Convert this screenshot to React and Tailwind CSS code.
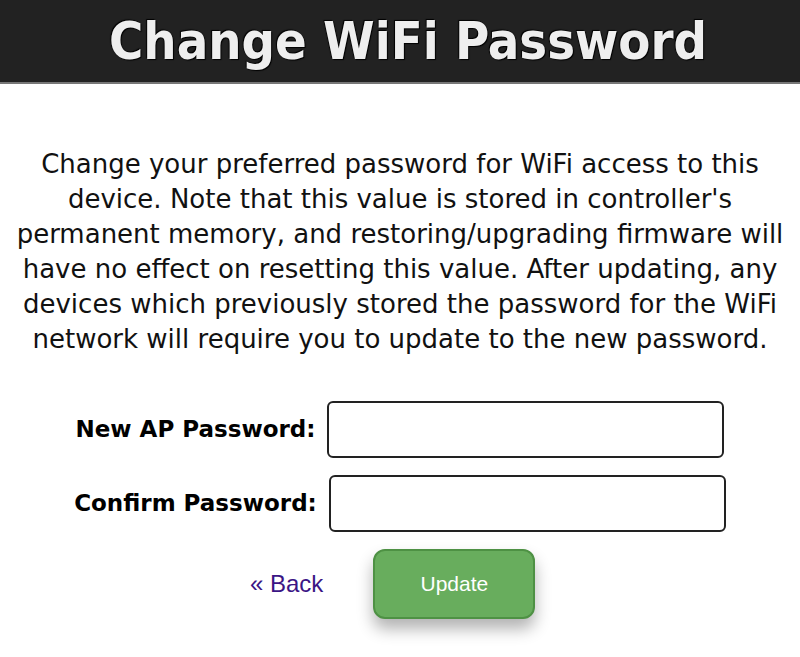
export default function App() {
  return (
    <div className="w-[800px] h-[657px] bg-white overflow-hidden" style={{ fontFamily: '"DejaVu Sans", Verdana, sans-serif' }}>
      <div className="h-[84px] bg-[#222222] border-b-2 border-[#777] flex items-center justify-center pl-[16px]">
        <h1 className="text-[52px] font-bold text-[#eeeeee] leading-none" style={{ fontFamily: '"DejaVu Sans Condensed", "DejaVu Sans", sans-serif', textShadow: '1px 1px 1px #000, -1px -1px 1px #000' }}>Change WiFi Password</h1>
      </div>
      <p className="mt-[63px] text-center text-[26px] leading-[35px] text-[#111] whitespace-nowrap">
        Change your preferred password for WiFi access to this<br />
        device. Note that this value is stored in controller's<br />
        permanent memory, and restoring/upgrading firmware will<br />
        have no effect on resetting this value. After updating, any<br />
        devices which previously stored the password for the WiFi<br />
        network will require you to update to the new password.
      </p>
      <div className="mt-[44px] flex flex-col gap-[17px]">
        <div className="flex items-center justify-center gap-[12px]">
          <label className="text-[23px] font-bold text-black">New AP Password:</label>
          <input type="password" className="w-[397px] h-[57px] border-2 border-[#222] rounded-[6px] bg-white" />
        </div>
        <div className="flex items-center justify-center gap-[12px]">
          <label className="text-[23px] font-bold text-black">Confirm Password:</label>
          <input type="password" className="w-[397px] h-[57px] border-2 border-[#222] rounded-[6px] bg-white" />
        </div>
      </div>
      <div className="mt-[17px] flex items-center">
        <a href="#" className="ml-[250px] text-[24px] text-[#3b1585] no-underline" style={{ fontFamily: '"Liberation Sans", Arial, sans-serif' }}>« Back</a>
        <button className="ml-[50px] w-[162px] h-[70px] bg-[#68ad5d] border-2 border-[#4e9144] rounded-[12px] text-white text-[21px] shadow-[0_10px_16px_rgba(0,0,0,0.3)]" style={{ fontFamily: '"Liberation Sans", Arial, sans-serif' }}>Update</button>
      </div>
    </div>
  );
}
